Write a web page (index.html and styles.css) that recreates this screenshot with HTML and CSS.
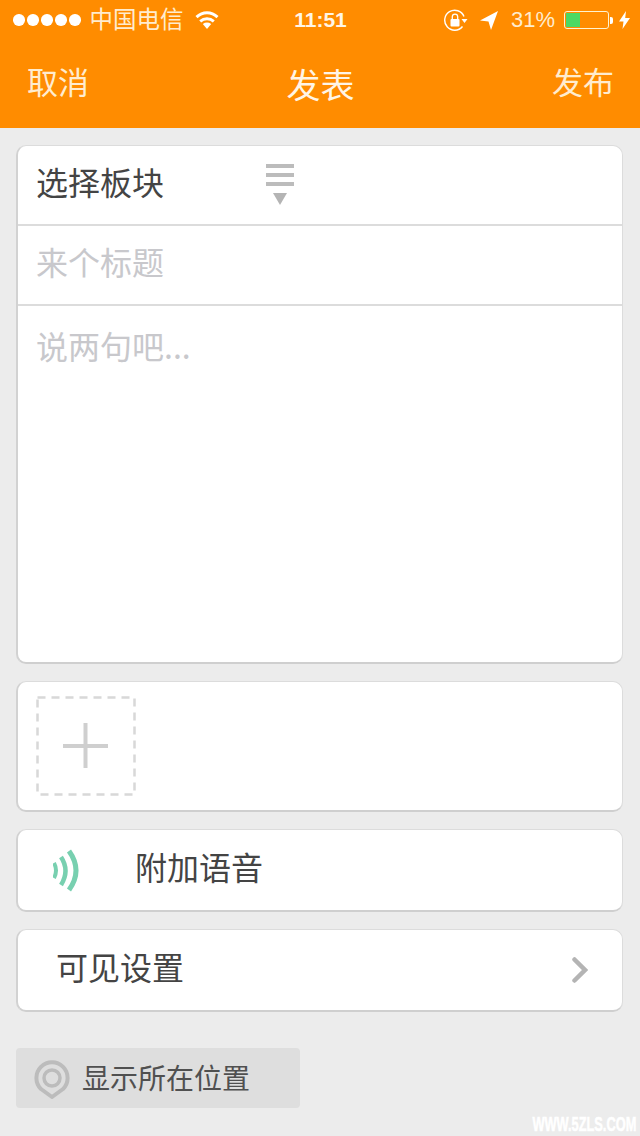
FILE: index.html

```html
<!DOCTYPE html>
<html lang="zh-CN">
<head>
<meta charset="UTF-8"/>
<title>发表</title>
<link rel="stylesheet" href="styles.css">
</head>
<body>
<div id="wrapper">
<div class="header">
	<div class="status">
		<div class="status-left">
			<div class="dots"><i></i><i></i><i></i><i></i><i></i></div>
			<span class="carrier">中国电信</span>
			<svg class="wifi" width="24" height="18" viewBox="0 0 24 18"><path d="M12 18l-4.200-5c2.600-1.900 5.800-1.900 8.400 0z" fill="#fff"/><path d="M5.200 10.300c4-3.400 9.600-3.400 13.600 0" fill="none" stroke="#fff" stroke-width="3"/><path d="M1.500 6.200c6.200-5.800 14.800-5.800 21 0" fill="none" stroke="#fff" stroke-width="3"/></svg>
		</div>
		<div class="time">11:51</div>
		<div class="status-right">
			<svg class="rotate" width="24" height="22" viewBox="0 0 24 22"><path d="M18.500 17.500A10 10 0 1 1 20 7.500" fill="none" stroke="#fff" stroke-width="1.400"/><path d="M17.500 10h6l-3 4z" fill="#fff"/><rect x="6.500" y="10" width="9" height="7.500" rx="1" fill="#fff"/><path d="M8.300 10V7.800a2.700 2.700 0 0 1 5.400 0V10" fill="none" stroke="#fff" stroke-width="1.300"/></svg>
			<svg class="arrow" width="18" height="19" viewBox="0 0 18 19"><path d="M18 0L0 9.500l8.500 1L11 19z" fill="#fff"/></svg>
			<span class="percent">31%</span>
			<div class="battery"><div class="battery-level"></div></div>
			<div class="battery-nub"></div>
			<svg class="bolt" width="11" height="18" viewBox="0 0 11 18"><path d="M7 0L0 10.500h4.500L3.500 18 11 7H6.200z" fill="#fff"/></svg>
		</div>
	</div>
	<div class="nav">
		<span class="nav-btn">取消</span>
		<span class="nav-title">发表</span>
		<span class="nav-btn">发布</span>
	</div>
</div>

<div class="content">
	<div class="card">
		<div class="row row-select">
			<span class="select-label">选择板块</span>
			<div class="select-icon">
				<i></i><i></i><i></i>
				<b></b>
			</div>
		</div>
		<div class="row row-title"><span class="row-text">来个标题</span></div>
		<div class="row-body">说两句吧...</div>
	</div>

	<div class="card card-photo">
		<svg width="100" height="100" viewBox="0 0 100 100">
			<rect x="1.500" y="1.500" width="97" height="97" fill="none" stroke="#d8d8d8" stroke-width="2.500" stroke-dasharray="8 6"/>
			<path d="M27 50h45M49.500 27v45" stroke="#cfcfcf" stroke-width="4" fill="none"/>
		</svg>
	</div>

	<div class="card card-voice">
		<svg class="voice-icon" width="26" height="43" viewBox="0 0 26 43"><g fill="none" stroke="#78d0b0"><path d="M1 14Q5 21.500 1 29" stroke-width="4"/><path d="M8 8Q17 21.500 8 36" stroke-width="4.500"/><path d="M16 2Q30 21.500 16 41" stroke-width="5"/></g></svg>
		<span class="item-label">附加语音</span>
	</div>

	<div class="card card-visible">
		<span class="item-label">可见设置</span>
		<svg class="chevron" width="16" height="26" viewBox="0 0 16 26"><path d="M2.500 2.500L13 13 2.500 23.500" fill="none" stroke="#b4b4b4" stroke-width="4.500" stroke-linecap="round"/></svg>
	</div>

	<div class="location">
		<svg class="pin" width="38" height="40" viewBox="0 0 38 40"><path d="M19 38L8 30A15.600 15.600 0 1 1 30 30z" fill="none" stroke="#bcbcbc" stroke-width="4" stroke-linejoin="round"/><circle cx="19" cy="19" r="8" fill="none" stroke="#bcbcbc" stroke-width="3.500"/></svg>
		<span class="location-label">显示所在位置</span>
	</div>
</div>
<div class="watermark">WWW.5ZLS.COM</div>
</div>
</body>
</html>
```

FILE: styles.css

```css
html, body {
	margin:0;
	padding:0;
}
body {
	background:#ececec;
	font-family:"Noto Sans CJK SC","Liberation Sans",sans-serif;
}
#wrapper {
	width:640px;
	height:1136px;
	position:relative;
	overflow:hidden;
	background:#ececec;
}

.header {
	height:128px;
	background:#ff8c00;
	color:#fff;
}
.status {
	height:40px;
	display:grid;
	grid-template-columns:1fr auto 1fr;
	align-items:center;
	padding:0 10px 0 13px;
}
.status-left, .status-right {
	display:flex;
	align-items:center;
}
.status-right {
	justify-content:flex-end;
}
.dots {
	display:flex;
	gap:2.500px;
	margin-right:9px;
}
.dots i {
	width:11.500px;
	height:11.500px;
	border-radius:50%;
	background:#fff;
}
.carrier {
	font-size:23.500px;
	line-height:30px;
	color:#ffeccf;
	margin-right:11px;
	padding-bottom:4px;
}
.time {
	font-family:"Liberation Sans",sans-serif;
	font-size:21px;
	font-weight:bold;
	color:#fff5e6;
	margin-left:-2px;
}
.rotate {
	margin-right:12px;
}
.arrow {
	margin-right:13px;
}
.percent {
	font-family:"Liberation Sans",sans-serif;
	font-size:22px;
	color:#ffeccf;
	margin-right:9px;
}
.battery {
	width:41px;
	height:14px;
	border:1px solid #fff3d0;
	border-radius:3px;
	padding:1px;
	margin-right:1px;
}
.battery-level {
	width:14px;
	height:100%;
	background:#4cd964;
}
.battery-nub {
	width:3px;
	height:7px;
	background:#fff;
	margin-right:6px;
	border-radius:0 2px 2px 0;
}

.nav {
	height:88px;
	box-sizing:border-box;
	display:flex;
	justify-content:space-between;
	align-items:center;
	padding:0 26px 6px 27px;
}
.nav-btn {
	font-size:31px;
	line-height:40px;
	color:#ffeccf;
}
.nav-title {
	font-size:34px;
	line-height:44px;
	color:#fff5e6;
	padding-top:6px;
}

.content {
	padding:17px 17px 0 16px;
}
.card {
	background:#fff;
	border:1px solid #dcdcdc;
	border-bottom:2px solid #cfcfcf;
	border-left:2px solid #d2d2d2;
	border-radius:10px;
	margin-bottom:17px;
}

.row {
	height:78px;
	border-bottom:2px solid #dcdcdc;
	display:flex;
	align-items:center;
	font-size:32px;
	padding-left:18px;
}
.row-select {
	color:#444;
}
.select-label {
	width:230px;
	padding-bottom:8px;
}
.select-icon {
	margin-bottom:2px;
}
.select-icon i {
	display:block;
	width:28px;
	height:4px;
	background:#bcbcbc;
	margin-bottom:5px;
}
.select-icon b {
	display:block;
	width:0;
	height:0;
	margin:7px auto 0;
	border-left:7px solid transparent;
	border-right:7px solid transparent;
	border-top:12px solid #b4b4b4;
}
.row-title {
	color:#c8c8cc;
}
.row-text {
	padding-bottom:8px;
}
.row-body {
	height:356px;
	box-sizing:border-box;
	padding:16px 0 0 18px;
	font-size:32px;
	line-height:46px;
	color:#c8c8cc;
}

.card-photo {
	height:114px;
	padding:14px 0 0 18px;
}

.card-voice, .card-visible {
	height:80px;
	display:flex;
	align-items:center;
}
.voice-icon {
	margin-left:35px;
	margin-right:56px;
}
.item-label {
	font-size:32px;
	color:#444;
	padding-bottom:8px;
}
.chevron {
	margin-bottom:1px;
}
.card-visible {
	justify-content:space-between;
	padding:0 34px 0 38px;
}

.location {
	width:284px;
	height:60px;
	margin-top:36px;
	background:#dedede;
	border-radius:4px;
	display:flex;
	align-items:center;
	padding-left:17px;
	box-sizing:border-box;
}
.pin {
	margin-top:2px;
}
.location-label {
	font-size:28px;
	color:#505050;
	margin-left:11px;
	padding-bottom:2px;
}

.watermark {
	position:absolute;
	right:4px;
	bottom:0;
	font-family:"Liberation Sans",sans-serif;
	font-size:21px;
	font-weight:bold;
	-webkit-text-stroke:.6px #fff;
	color:#fff;
	transform:scaleX(.61);
	transform-origin:right bottom;
	white-space:nowrap;
}
```
